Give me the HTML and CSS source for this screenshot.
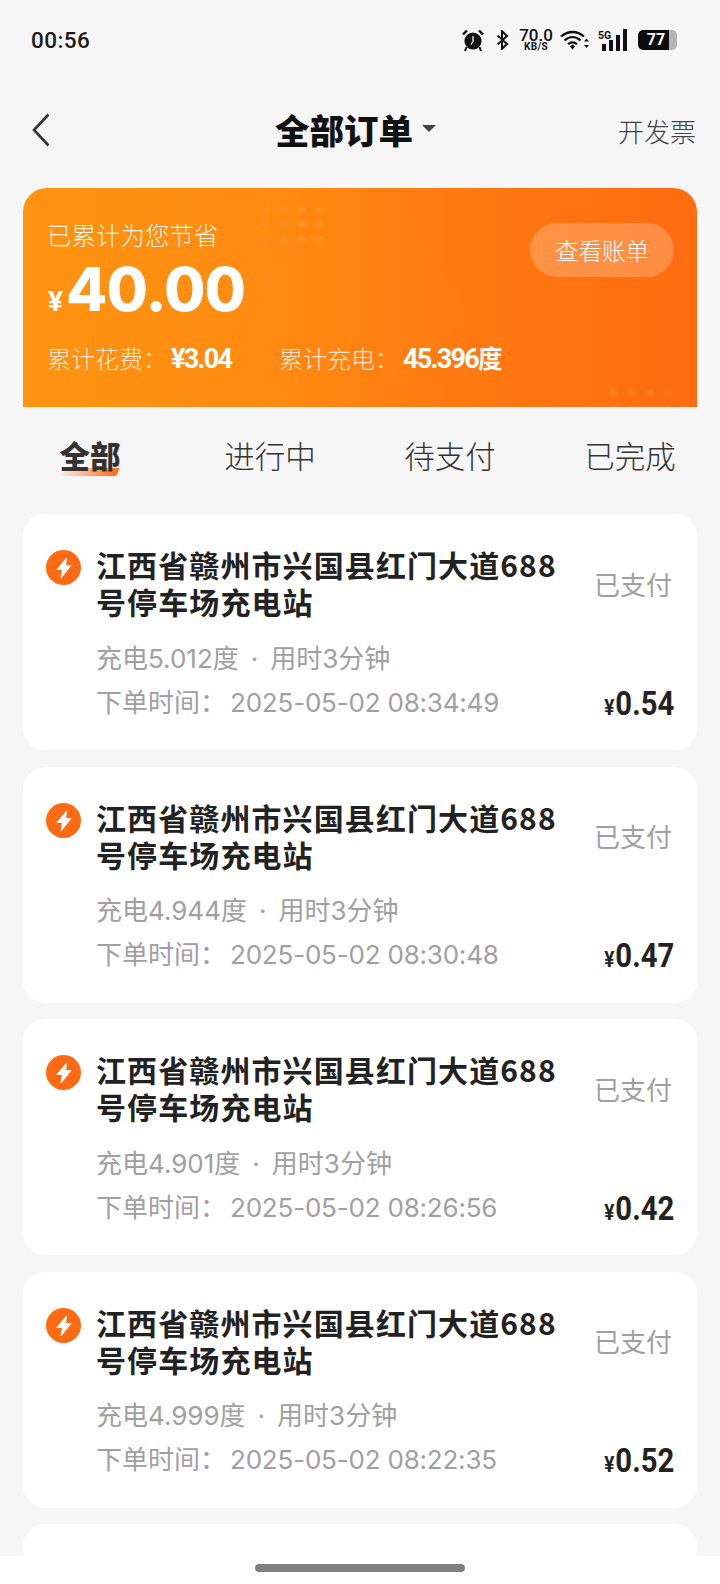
FILE: index.html
```html
<!DOCTYPE html>
<html lang="zh">
<head>
<meta charset="utf-8">
<title>全部订单</title>
<link rel="stylesheet" href="styles.css">
</head>
<body>
<div class="page">
  <div class="statusbar">
    <span class="time">00:56</span>
    <div class="status-icons">
      <svg class="ic-alarm" viewBox="0 0 22 23"><path d="M1 5.500 5 1.500" stroke="#111" stroke-width="2.400" fill="none"/><path d="M17 1.500 21 5.500" stroke="#111" stroke-width="2.400" fill="none"/><circle cx="11" cy="12" r="8.600" fill="#111"/><path d="M11 7v5.500l-2 3" stroke="#f6f6f6" stroke-width="1.300" fill="none"/><path d="M4.500 18 3 22M17.500 18 19 22" stroke="#111" stroke-width="2" fill="none"/></svg>
      <svg class="ic-bt" viewBox="0 0 13 20"><path d="M1.500 5.500 11 14l-5 4.800V1.200L11 6 1.500 14.500" stroke="#111" stroke-width="2" fill="none"/></svg>
      <div class="speed"><span class="speed-num">70.0</span><span class="speed-unit">KB/S</span></div>
      <svg class="ic-wifi" viewBox="0 0 30 20"><path d="M1 6.500C8 .5 17 .5 24 6.500M4.500 10.500C9.500 6 15.500 6 20.500 10.500M8 14.200c3-2.500 6-2.500 9 0" stroke="#111" stroke-width="2.300" fill="none"/><path d="M9.800 16.200 12.500 14.500 15.200 16.200 12.500 19.500Z" fill="#111"/><path d="M26.500 8.500 29 11.500H24ZM26.500 18 29 15H24Z" fill="#111"/></svg>
      <svg class="ic-signal" viewBox="0 0 30 22"><text x="0" y="9.500" class="sig-text">5G</text><rect x="4" y="15" width="4" height="7" fill="#111"/><rect x="11" y="11" width="4" height="11" fill="#111"/><rect x="18" y="6" width="4" height="16" fill="#111"/><rect x="25" y="0" width="4" height="22" fill="#111"/></svg>
      <div class="battery"><span class="battery-fill">77</span></div>
    </div>
  </div>

  <header class="navbar">
    <svg class="back" viewBox="0 0 20 34"><path d="M17.500 1.500 3 17l14.500 15.500" stroke="#333" stroke-width="2.600" fill="none"/></svg>
    <div class="nav-title"><h1>全部订单</h1><span class="caret"></span></div>
    <span class="invoice">开发票</span>
  </header>

  <section class="banner">
    <div class="dots dots-top"></div>
    <div class="dots dots-bottom"></div>
    <div class="facet"></div>
    <div class="banner-main">
      <div class="banner-left">
        <div class="saved-label">已累计为您节省</div>
        <div class="saved-amount"><span class="yen">¥</span>40.00</div>
      </div>
      <button class="bill-btn">查看账单</button>
    </div>
    <div class="stats">
      <span class="stat stat-cost">累计花费：<b>¥3.04</b></span>
      <span class="stat">累计充电：<b>45.396<em>度</em></b></span>
    </div>
  </section>

  <nav class="tabs">
    <span class="tab active">全部</span>
    <span class="tab">进行中</span>
    <span class="tab">待支付</span>
    <span class="tab">已完成</span>
  </nav>

  <main class="orders">
    <article class="order">
      <svg class="bolt" viewBox="0 0 35 35"><circle cx="17.500" cy="17.500" r="17.500" fill="#ff6a13"/><path d="M20.500 8 11 19.500h5.500L15 28l10-12.500h-5.500Z" fill="#fff" stroke="#fff" stroke-width="1" stroke-linejoin="round"/></svg>
      <div class="order-body">
        <div class="order-top"><h2>江西省赣州市兴国县红门大道688号停车场充电站</h2><span class="state">已支付</span></div>
        <div class="meta">充电5.012度<span class="sep">·</span>用时3分钟</div>
        <div class="order-bottom"><span class="meta">下单时间：<span class="date">2025-05-02 08:34:49</span></span><span class="price"><i>¥</i>0.54</span></div>
      </div>
    </article>
    <article class="order">
      <svg class="bolt" viewBox="0 0 35 35"><circle cx="17.500" cy="17.500" r="17.500" fill="#ff6a13"/><path d="M20.500 8 11 19.500h5.500L15 28l10-12.500h-5.500Z" fill="#fff" stroke="#fff" stroke-width="1" stroke-linejoin="round"/></svg>
      <div class="order-body">
        <div class="order-top"><h2>江西省赣州市兴国县红门大道688号停车场充电站</h2><span class="state">已支付</span></div>
        <div class="meta">充电4.944度<span class="sep">·</span>用时3分钟</div>
        <div class="order-bottom"><span class="meta">下单时间：<span class="date">2025-05-02 08:30:48</span></span><span class="price"><i>¥</i>0.47</span></div>
      </div>
    </article>
    <article class="order">
      <svg class="bolt" viewBox="0 0 35 35"><circle cx="17.500" cy="17.500" r="17.500" fill="#ff6a13"/><path d="M20.500 8 11 19.500h5.500L15 28l10-12.500h-5.500Z" fill="#fff" stroke="#fff" stroke-width="1" stroke-linejoin="round"/></svg>
      <div class="order-body">
        <div class="order-top"><h2>江西省赣州市兴国县红门大道688号停车场充电站</h2><span class="state">已支付</span></div>
        <div class="meta">充电4.901度<span class="sep">·</span>用时3分钟</div>
        <div class="order-bottom"><span class="meta">下单时间：<span class="date">2025-05-02 08:26:56</span></span><span class="price"><i>¥</i>0.42</span></div>
      </div>
    </article>
    <article class="order">
      <svg class="bolt" viewBox="0 0 35 35"><circle cx="17.500" cy="17.500" r="17.500" fill="#ff6a13"/><path d="M20.500 8 11 19.500h5.500L15 28l10-12.500h-5.500Z" fill="#fff" stroke="#fff" stroke-width="1" stroke-linejoin="round"/></svg>
      <div class="order-body">
        <div class="order-top"><h2>江西省赣州市兴国县红门大道688号停车场充电站</h2><span class="state">已支付</span></div>
        <div class="meta">充电4.999度<span class="sep">·</span>用时3分钟</div>
        <div class="order-bottom"><span class="meta">下单时间：<span class="date">2025-05-02 08:22:35</span></span><span class="price"><i>¥</i>0.52</span></div>
      </div>
    </article>
    <article class="order"></article>
  </main>

  <footer class="gesture"><span class="handle"></span></footer>
</div>
</body>
</html>
```

FILE: styles.css
```css
* { box-sizing: border-box; }
html, body { margin: 0; padding: 0; }
body {
  background: #f6f6f6;
  font-family: Roboto, "Noto Sans CJK SC", sans-serif;
  color: #222;
}
.page {
  width: 720px;
  height: 1584px;
  display: flex;
  flex-direction: column;
  overflow: hidden;
}

/* status bar */
.statusbar {
  height: 80px;
  flex: none;
  display: flex;
  align-items: center;
  justify-content: space-between;
  padding: 0 43px 0 31px;
}
.time { font-size: 22.500px; font-weight: 500; color: #1a1a1a; letter-spacing: .4px; }
.status-icons { display: flex; align-items: center; }
.ic-alarm { width: 22px; height: 23px; }
.ic-bt { width: 13px; height: 20px; margin-left: 12px; }
.speed {
  display: flex;
  flex-direction: column;
  align-items: center;
  width: 34px;
  margin-left: 10px;
  color: #111;
  line-height: 1;
}
.speed-num { font-size: 17px; font-weight: 500; height: 14px; line-height: 14px; }
.speed-unit { font-size: 10px; font-weight: 700; letter-spacing: .3px; }
.ic-wifi { width: 30px; height: 20px; margin-left: 7px; }
.ic-signal { width: 30px; height: 22px; margin-left: 8px; }
.sig-text { font: 700 10.500px Roboto, sans-serif; fill: #111; }
.battery {
  width: 39px;
  height: 20px;
  margin-left: 10px;
  border-radius: 5px;
  background: #b5b5b5;
  overflow: hidden;
}
.battery-fill {
  display: block;
  width: 31px;
  height: 20px;
  background: #0c0c0c;
  color: #fff;
  font-size: 16px;
  font-weight: 700;
  line-height: 20px;
  text-align: center;
  border-radius: 5px 0 0 5px;
  padding-left: 5px;
}

/* nav */
.navbar {
  height: 100px;
  flex: none;
  display: grid;
  grid-template-columns: 1fr auto 1fr;
  align-items: center;
  padding: 0 24px 0 31px;
}
.back { width: 20px; height: 34px; }
.nav-title { display: flex; align-items: center; margin-left: -16px; }
.nav-title h1 { margin: 0; font-size: 34.500px; font-weight: 900; color: #111; line-height: 1.2; font-family: "Noto Sans CJK SC", sans-serif; }
.caret {
  width: 0;
  height: 0;
  margin: 0 0 2px 9px;
  border-left: 7px solid transparent;
  border-right: 7px solid transparent;
  border-top: 7px solid #444;
}
.invoice { justify-self: end; font-size: 26px; font-weight: 300; color: #444; font-family: "Noto Sans CJK SC", sans-serif; }

/* banner */
.banner {
  position: relative;
  flex: none;
  height: 219px;
  margin: 8px 23px 0;
  padding: 29px 24px 0;
  border-radius: 24px 24px 0 0;
  background: linear-gradient(90deg, #ff9310 0%, #ff8a10 35%, #ff7a10 65%, #ff6c10 100%);
  color: #fff;
  overflow: hidden;
  font-family: "Noto Sans CJK SC", sans-serif;
}
.dots {
  position: absolute;
  background-image: radial-gradient(circle, rgba(255,190,90,.16) 3.500px, transparent 4px);
  background-size: 18px 15px;
}
.dots-top { left: 234px; top: 14px; width: 76px; height: 46px; }
.dots-bottom { left: 582px; top: 198px; width: 72px; height: 21px; background-image: radial-gradient(circle, rgba(255,170,70,.22) 3.500px, transparent 4px); }
.facet {
  position: absolute;
  inset: 0;
  background: rgba(255,200,90,.022);
  clip-path: polygon(0 0, 370px 0, 450px 130px, 330px 219px, 0 219px);
}
.banner-main { position: relative; display: flex; justify-content: space-between; align-items: flex-start; }
.saved-label { font-size: 24.500px; font-weight: 300; line-height: 36px; color: rgba(255,255,255,.92); }
.saved-amount {
  display: flex;
  align-items: baseline;
  margin-top: 3px;
  margin-left: 1px;
  font-family: Inter, Roboto, sans-serif;
  font-size: 60px;
  font-weight: 800;
  line-height: 66px;
  letter-spacing: -.8px;
}
.yen { font-family: Roboto, sans-serif; font-size: 28px; font-weight: 700; margin-right: 3px; letter-spacing: 0; }
.bill-btn {
  width: 144px;
  height: 54px;
  margin: 6px -1px 0 0;
  padding: 0;
  border: 0;
  border-radius: 27px;
  background: rgba(255,255,255,.22);
  color: #fff;
  font: 300 23.500px "Noto Sans CJK SC", sans-serif;
}
.stats { position: relative; display: flex; margin-top: 5px; }
.stat { font-size: 24px; font-weight: 300; line-height: 36px; color: rgba(255,255,255,.8); white-space: nowrap; }
.stat b {
  margin-left: 4px;
  color: #fff;
  font-family: Roboto, sans-serif;
  font-size: 27px;
  font-weight: 700;
  letter-spacing: -1.700px;
}
.stat em { font: 700 24.500px "Noto Sans CJK SC", sans-serif; letter-spacing: 0; }
.stat-cost { width: 232px; }

/* tabs */
.tabs {
  height: 102px;
  flex: none;
  display: grid;
  grid-template-columns: repeat(4, 180px);
  align-items: center;
  justify-items: center;
  padding-bottom: 7px;
}
.tab { position: relative; font-size: 30.500px; font-weight: 300; line-height: 44px; color: #333; font-family: "Noto Sans CJK SC", sans-serif; }
.tab.active { font-weight: 900; }
.tab.active::after {
  content: "";
  position: absolute;
  left: 3px;
  right: 3px;
  bottom: 1px;
  height: 8px;
  z-index: -1;
  background: linear-gradient(90deg, rgba(255,150,60,.12), #ff6a13);
  transform: skewX(-20deg);
  border-radius: 0 0 2px 2px;
}

/* orders */
.orders {
  flex: 1;
  min-height: 0;
  overflow: hidden;
  display: flex;
  flex-direction: column;
  gap: 16.600px;
  margin: 5px 23px 0;
}
.order {
  flex: none;
  height: 236px;
  display: flex;
  align-items: flex-start;
  padding: 32px 25px 0 23px;
  background: #fff;
  border-radius: 22px;
}
.bolt { width: 35px; height: 35px; flex: none; margin-top: 4px; }
.order-body { flex: 1; margin-left: 15px; min-width: 0; }
.order-top { display: flex; align-items: center; justify-content: space-between; }
.order-top h2 {
  width: 473px;
  margin: 0;
  font: 700 30px/37px "Noto Sans CJK SC", sans-serif;
  letter-spacing: 1.100px;
  color: #222;
}
.state { font-size: 26px; color: #a0a0a0; font-family: "Noto Sans CJK SC", sans-serif; }
.meta { font-size: 26px; line-height: 44px; color: #a0a0a0; font-family: Inter, "Noto Sans CJK SC", sans-serif; }
.order-top + .meta { margin-top: 16.500px; }
.sep { margin: 0 12px; }
.date { margin-left: 4px; letter-spacing: -.2px; }
.order-bottom { display: flex; justify-content: space-between; align-items: center; }
.price {
  display: inline-block;
  margin-right: -2px;
  font-family: Roboto, sans-serif;
  font-size: 34px;
  font-weight: 700;
  color: #222;
  transform: scaleX(.86);
  transform-origin: right center;
}
.price i { font-style: normal; font-size: 22px; margin-right: 1px; }

/* gesture bar */
.gesture {
  height: 28px;
  flex: none;
  background: #fff;
  display: flex;
  justify-content: center;
  padding-top: 8px;
}
.handle { width: 210px; height: 8px; border-radius: 4px; background: #808080; }
```
